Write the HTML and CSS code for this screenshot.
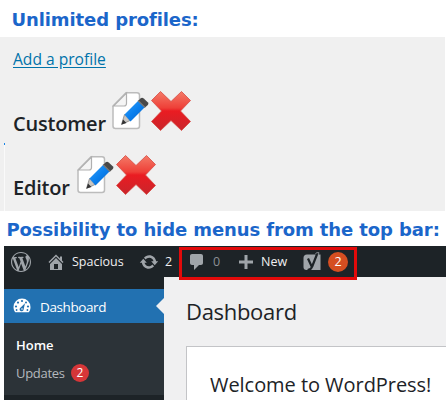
FILE: index.html
```
<!DOCTYPE html>
<html lang="en">
<head>
<meta charset="utf-8">
<title>Profiles</title>
<link rel="stylesheet" href="styles.css">
</head>
<body>
<svg class="defs" width="0" height="0">
  <defs>
    <linearGradient id="red" x1="0" y1="0" x2="0" y2="1"><stop offset="0" stop-color="#f47a68"/><stop offset=".42" stop-color="#ee4038"/><stop offset=".5" stop-color="#ea1c22"/><stop offset="1" stop-color="#c9252b"/></linearGradient>
    <linearGradient id="blue" x1="0" y1="0" x2="1" y2="1"><stop offset="0" stop-color="#36a0f8"/><stop offset=".5" stop-color="#0a80ee"/><stop offset="1" stop-color="#0b62c4"/></linearGradient>
    <symbol id="edit" viewBox="0 0 38 40">
      <path d="M14 1.8H25Q27.500 1.800 27.500 4.300V35Q27.500 37.500 25 37.500H3.500Q1 37.500 1 35V15Z" fill="#fff" stroke="#bcbcbc" stroke-width="1.500"/>
      <path d="M14.500 2V12.500Q14.500 15 12 15H1.500Z" fill="#f5f5f5" stroke="#b0b0b0" stroke-width="1.200"/>
      <path d="M9.500 33.500L12.500 23.500L18 29.500Z" fill="#c9c6c2" stroke="#777" stroke-width=".7"/>
      <path d="M9.500 33.500L11 28.500L14.500 32Z" fill="#333"/>
      <path d="M12.500 23.500L26 10L33 16L18.500 30.500Z" fill="url(#blue)"/>
      <path d="M26 10L28.500 7.500Q30 6 31.700 7.500L36 11.500Q37 12.800 35.800 14L33 16.500Z" fill="#484848"/>
      <path d="M26 9.500L33 16.500" stroke="#777" stroke-width="1.200"/>
    </symbol>
    <symbol id="cross" viewBox="0 0 40 40">
      <path d="M9.500.5L20 10.500L30.500.5L39.500 9.500L29.500 20L39.500 30.500L30.500 39.500L20 29.500L9.500 39.500L.5 30.500L10.500 20L.5 9.500Z" fill="url(#red)" stroke="#d64a43" stroke-width=".8" stroke-linejoin="round"/>
    </symbol>
  </defs>
</svg>
<h2 class="caption first"><span>Unlimited profiles:</span></h2>
<section class="profiles">
  <a class="add" href="#">Add a profile</a>
  <div class="profile customer"><h3>Customer</h3><svg class="edit"><use href="#edit"/></svg><svg class="cross"><use href="#cross"/></svg></div>
  <div class="profile editor"><h3>Editor</h3><svg class="edit"><use href="#edit"/></svg><svg class="cross"><use href="#cross"/></svg></div>
  <i class="seam"></i>
</section>
<h2 class="caption second"><span>Possibility to hide menus from the top bar:</span></h2>
<section class="admin">
  <header class="bar">
    <svg class="wp" viewBox="0 0 20 20"><path d="M20 10c0-5.510-4.490-10-10-10C4.480 0 0 4.490 0 10c0 5.520 4.480 10 10 10 5.510 0 10-4.480 10-10zM7.780 15.370L4.370 6.220c.55-.02 1.170-.08 1.170-.08.5-.06.44-1.130-.06-1.110 0 0-1.450.11-2.370.11-.18 0-.37 0-.58-.01C4.120 2.690 6.870 1.110 10 1.110c2.330 0 4.450.87 6.050 2.340-.68-.11-1.650.39-1.650 1.580 0 .74.45 1.360.9 2.100.35.61.55 1.360.55 2.460 0 1.490-1.400 5-1.400 5l-3.030-8.370c.54-.02.82-.17.82-.17.5-.05.44-1.250-.06-1.220 0 0-1.440.12-2.380.12-.87 0-2.330-.12-2.330-.12-.5-.03-.56 1.200-.06 1.220l.92.08 1.260 3.410zM17.410 10c.24-.64.74-1.870.43-4.250.7 1.290 1.050 2.710 1.050 4.250 0 3.290-1.730 6.240-4.400 7.780.97-2.590 1.940-5.200 2.920-7.780zM6.100 18.090C3.120 16.650 1.110 13.530 1.110 10c0-1.300.23-2.480.72-3.590C3.250 10.300 4.670 14.200 6.100 18.090zm4.030-6.630l2.580 6.980c-.86.29-1.760.45-2.710.45-.79 0-1.570-.11-2.290-.33.81-2.380 1.620-4.740 2.420-7.100z"/></svg>
    <svg class="home" viewBox="0 0 20 20"><path fill-rule="evenodd" d="M16 8.500l1.530 1.530-1.060 1.060L10 4.600l-6.470 6.490-1.060-1.060L10 2.500l4 4v-2h2v4zm-6-2.460l6 5.990V18H4v-5.970zM12 17v-5H8v5h4z"/></svg>
    <span class="site">Spacious</span>
    <svg class="sync" viewBox="0 0 20 20"><path d="M10.200 3.280c3.530 0 6.430 2.610 6.920 6h2.080l-3.500 4-3.500-4h2.320c-.45-1.970-2.210-3.450-4.320-3.450-1.450 0-2.730.71-3.540 1.780L4.950 5.660C6.230 4.200 8.110 3.280 10.200 3.280zm-.4 13.440c-3.520 0-6.430-2.610-6.920-6H.8l3.500-4 3.500 4H5.480c.45 1.970 2.210 3.450 4.320 3.450 1.450 0 2.730-.71 3.540-1.780l1.710 1.950c-1.280 1.460-3.150 2.380-5.250 2.380z"/></svg>
    <span class="count">2</span>
    <svg class="comment" viewBox="0 0 20 20"><path d="M5 2h9c1.100 0 2 .9 2 2v7c0 1.100-.9 2-2 2h-2l-5 5v-5H5c-1.100 0-2-.9-2-2V4c0-1.100.9-2 2-2z"/></svg>
    <span class="zero">0</span>
    <svg class="plus" viewBox="0 0 14 14"><path d="M5.500 0h3v5.500H14v3H8.500V14h-3V8.500H0v-3h5.500z"/></svg>
    <span class="new">New</span>
    <svg class="yoast" viewBox="0 0 18 20"><path d="M4 2.500H17.500V18H3.500Q.5 18 .5 15V6Q.5 2.500 4 2.500Z"/><path class="stem" d="M5 6.500L8.800 14.800M14.500 1L9.200 14.500Q8 18 4.500 18"/><path class="tip" d="M12.500 2L13.500.7H16L15.200 3"/></svg>
    <span class="alerts">2</span>
    <i class="highlight"></i>
  </header>
  <div class="body">
    <nav class="menu">
      <div class="current">
        <svg class="gauge" viewBox="0 0 18 15"><path class="dome" d="M2.300 14.300C.8 12.500.5 10.500.5 9a8.500 8.500 0 0 1 17 0c0 1.500-.3 3.500-1.800 5.300Z"/><g><circle cx="9" cy="3" r="1.100"/><circle cx="5" cy="4.600" r="1.100"/><circle cx="13" cy="4.600" r="1"/><circle cx="3" cy="8.500" r="1.100"/><circle cx="15" cy="8.500" r="1.100"/><circle cx="3.600" cy="12" r=".9"/><circle cx="14.400" cy="12" r=".9"/><path d="M12 5.200L10.600 11.500A2 2 0 1 1 7.400 9.700Z"/></g><circle class="dome" cx="9" cy="11" r=".8"/></svg>
        <span>Dashboard</span>
      </div>
      <div class="submenu"><b>Home</b><div class="updates"><span>Updates</span><em>2</em></div></div>
    </nav>
    <main>
      <h1>Dashboard</h1>
      <div class="panel"><h3>Welcome to WordPress!</h3></div>
    </main>
  </div>
</section>
</body>
</html>
```

FILE: styles.css
```
* { box-sizing: border-box; }
body { margin: 0; width: 446px; height: 400px; overflow: hidden; background: #fff; color: #1d2327; font-family: "Open Sans", "Noto Sans", sans-serif; }
h1, h2, h3 { margin: 0; font-weight: 400; }
svg { display: block; flex: none; }
span, b, em, h1, h3 { white-space: nowrap; }
.defs { position: absolute; }
.caption { font: bold 18px/20px "DejaVu Sans", sans-serif; letter-spacing: -.1px; color: #1b66ca; white-space: nowrap; }
.first { height: 37px; padding: 10px 0 0 11.5px; }
.second { height: 35px; padding: 9px 0 0 6.5px; }
.profiles { position: relative; width: 445px; height: 174px; padding-left: 13px; background: #f0f0f0; }
.add { display: block; height: 53px; padding-top: 12px; font-size: 15.6px; line-height: 20px; color: #0073aa; text-underline-offset: 2px; }
.profile { display: flex; height: 64px; }
.profile h3 { font-size: 20px; line-height: 28px; font-weight: 600; padding-top: 20px; letter-spacing: -.2px; }
.customer h3 { width: 99px; }
.editor h3 { width: 64px; }
.edit { width: 38px; height: 40px; margin-top: 1px; }
.cross { width: 40px; height: 40px; margin: 1px 0 0 1px; }
.seam { position: absolute; left: 4px; top: 106px; width: 1px; height: 68px; background: #fafafa; border-top: 2px solid #1683e6; }
.admin { height: 154px; margin-left: 4px; background: #1d2327; }
.bar { position: relative; display: flex; align-items: center; height: 31px; font-size: 12.5px; color: #f0f0f1; }
.bar > span { line-height: 20px; padding-top: 1px; }
.bar svg { fill: #a0a5aa; }
.wp { width: 20px; height: 20px; margin-left: 7px; }
.home { width: 20px; height: 20px; margin-left: 15px; }
.site { width: 68px; margin-left: 6px; }
.sync { width: 20px; height: 20px; margin-left: -1px; }
.count { width: 21px; margin-left: 6px; }
.bar .comment { width: 20px; height: 20px; margin-left: 1px; }
.zero { width: 21px; margin-left: 6px; color: #8c8f94; }
.plus { width: 14px; height: 14px; margin-left: 5px; }
.new { width: 38px; margin-left: 8px; }
.yoast { width: 18px; height: 20px; margin-left: 4px; }
.stem { fill: none; stroke: #1d2327; stroke-width: 2.200; }
.tip { fill: none; stroke: #a0a5aa; stroke-width: .8; }
.bar > .alerts { width: 20px; height: 20px; margin-left: 7px; padding: 0; border-radius: 50%; background: #d54e21; color: #fff; text-align: center; }
.highlight { position: absolute; z-index: 2; left: 175px; top: 1px; width: 178px; height: 33px; border: 3px solid #e20a0a; }
.body { display: flex; height: 123px; }
.menu { width: 160px; padding-top: 12px; }
.current { position: relative; display: flex; align-items: center; height: 34px; padding: 1px 0 0 9px; gap: 9px; background: #2271b1; color: #fff; font-size: 13.5px; letter-spacing: -.4px; }
.current::after { content: ""; position: absolute; right: 0; top: 9px; border: 8px solid transparent; border-right-color: #f0f0f1; border-left: 0; }
.gauge { width: 18px; height: 15px; margin-bottom: 2px; fill: #2271b1; }
.gauge .dome { fill: #fff; }
.submenu { height: 72px; padding: 12px 0 0 12px; background: #2c3338; color: #fff; font-size: 13px; line-height: 20px; }
.submenu b { display: block; font-weight: 600; }
.updates { display: flex; align-items: center; height: 20px; margin-top: 8px; color: #b4b9be; }
.updates span { width: 55px; letter-spacing: -.3px; }
.updates em { width: 18px; height: 18px; border-radius: 50%; background: #d63638; color: #fff; font-style: normal; font-size: 12px; line-height: 18px; text-align: center; }
main { flex: 1; padding-left: 22px; background: #f0f0f1; overflow: hidden; }
h1 { height: 69px; padding-top: 19px; font-size: 22px; line-height: 30px; letter-spacing: -.3px; }
.panel { height: 60px; padding: 23px 0 0 23px; border: 1px solid #c3c4c7; border-right: 0; background: #fff; }
.panel h3 { font-size: 20px; line-height: 30px; letter-spacing: -.05px; }
```
